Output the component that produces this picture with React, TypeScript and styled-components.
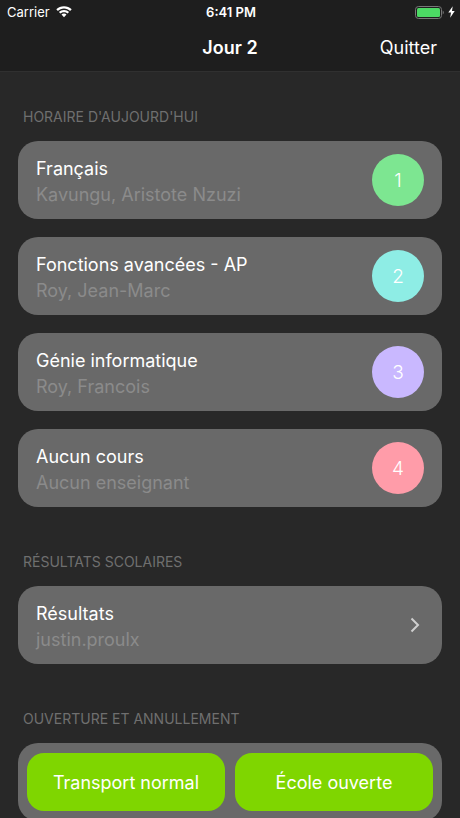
import React from "react";
import styled, { createGlobalStyle } from "styled-components";

const GlobalStyle = createGlobalStyle`
  *, *::before, *::after { box-sizing: border-box; }
  body {
    margin: 0;
    background: #282828;
    color: #fff;
    font-family: Inter, "Liberation Sans", sans-serif;
  }
  button, a { font: inherit; color: inherit; }
`;

const Screen = styled.div`
  display: flex;
  flex-direction: column;
  height: 100vh;
`;

const TopBar = styled.header`
  flex: none;
  background: #1e1e1e;
  border-bottom: 1px solid #303030;
`;

const StatusBar = styled.div`
  display: grid;
  grid-template-columns: 1fr auto 1fr;
  align-items: center;
  height: 24px;
  padding: 0 5px 0 7px;
  font-size: 13px;
  line-height: 16px;
`;

const Carrier = styled.div`
  display: flex;
  align-items: center;
  gap: 6px;
`;

const Clock = styled.time`
  font-weight: 600;
`;

const Power = styled.div`
  display: flex;
  align-items: center;
  justify-content: flex-end;
  gap: 4px;
`;

const NavBar = styled.div`
  display: grid;
  grid-template-columns: 1fr auto 1fr;
  align-items: center;
  height: 47px;
  padding: 0 23px;
`;

const Title = styled.h1`
  grid-column: 2;
  margin: 0;
  font-size: 18px;
  font-weight: 600;
  line-height: 24px;
`;

const QuitButton = styled.button`
  justify-self: end;
  padding: 0;
  border: 0;
  background: none;
  font-size: 18px;
  line-height: 24px;
  cursor: pointer;
`;

const Content = styled.main`
  flex: 1;
  min-height: 0;
  overflow-y: auto;
  scrollbar-width: none;
  padding: 35px 18px 18px;
  display: flex;
  flex-direction: column;
  gap: 45px;
`;

const Section = styled.section`
  display: flex;
  flex-direction: column;
  gap: 14px;
`;

const SectionTitle = styled.h2`
  margin: 0;
  padding-left: 5px;
  color: #6f6f6f;
  font-size: 14px;
  font-weight: 400;
  line-height: 20px;
  text-transform: uppercase;
`;

const CardList = styled.ul`
  display: flex;
  flex-direction: column;
  gap: 18px;
  margin: 0;
  padding: 0;
  list-style: none;
`;

const Card = styled.div`
  display: flex;
  align-items: center;
  justify-content: space-between;
  min-height: 78px;
  padding: 0 18px;
  border-radius: 20px;
  background: #696969;
  text-decoration: none;
`;

const CardText = styled.div`
  padding-top: 4px;
  font-size: 18px;
  line-height: 26px;
`;

const Primary = styled.div`
  color: #fff;
`;

const Secondary = styled.div`
  color: #8b8b8b;
`;

const Period = styled.span<{ $color: string }>`
  display: grid;
  place-items: center;
  flex: none;
  width: 52px;
  height: 52px;
  padding-top: 2px;
  border-radius: 50%;
  background: ${(p) => p.$color};
  font-size: 19px;
  font-weight: 300;
  line-height: 24px;
`;

const StatusPanel = styled.div`
  display: grid;
  grid-template-columns: 1fr 1fr;
  gap: 10px;
  padding: 10px 9px;
  border-radius: 20px;
  background: #696969;
`;

const StatusButton = styled.button`
  height: 58px;
  padding: 2px 0 0;
  border: 0;
  border-radius: 17px;
  background: #7fd600;
  font-size: 18px;
  line-height: 24px;
  cursor: pointer;
`;

const WifiIcon = () => (
  <svg width="16" height="12" viewBox="0 0 16 12" fill="#fff" aria-hidden="true">
    <path d="M8 0.3C5 0.3 2.3 1.4 0.3 3.3L1.9 4.9C3.5 3.4 5.6 2.5 8 2.5s4.5.9 6.1 2.4l1.6-1.6C13.7 1.4 11 .3 8 .3Z" />
    <path d="M8 4C6 4 4.200 4.700 2.900 6L4.500 7.600C5.400 6.700 6.600 6.200 8 6.200s2.600.5 3.500 1.400L13.100 6C11.800 4.700 10 4 8 4Z" />
    <path d="M8 7.600c-1 0-1.900.4-2.500 1L8 11.200l2.500-2.600c-.6-.6-1.500-1-2.500-1Z" />
  </svg>
);

const BatteryIcon = () => (
  <svg width="29" height="13" viewBox="0 0 29 13" aria-hidden="true">
    <rect x="0.500" y="0.500" width="26" height="12" rx="3" fill="none" stroke="#777" />
    <rect x="2" y="2" width="23" height="9" rx="1.500" fill="#4cd964" />
    <path d="M27.700 4.500C28.500 5 28.800 5.700 28.800 6.500s-.3 1.500-1.100 2Z" fill="#777" />
  </svg>
);

const BoltIcon = () => (
  <svg width="7" height="12" viewBox="0 0 7 12" fill="#fff" aria-hidden="true">
    <path d="M4.700 0.300L0.300 6.600H3L2.200 11.700L6.700 5H4Z" />
  </svg>
);

const ChevronIcon = () => (
  <svg width="18" height="18" viewBox="0 0 18 18" aria-hidden="true">
    <path d="M5.500 2.500L12 9L5.500 15.500" fill="none" stroke="#cfcfcf" strokeWidth="2" />
  </svg>
);

const courses = [
  { name: "Français", teacher: "Kavungu, Aristote Nzuzi", color: "#7de691" },
  { name: "Fonctions avancées - AP", teacher: "Roy, Jean-Marc", color: "#8eede5" },
  { name: "Génie informatique", teacher: "Roy, Francois", color: "#c9b8ff" },
  { name: "Aucun cours", teacher: "Aucun enseignant", color: "#ff9ca9" },
];

export default function App() {
  return (
    <Screen>
      <GlobalStyle />
      <TopBar>
        <StatusBar>
          <Carrier>
            Carrier
            <WifiIcon />
          </Carrier>
          <Clock>6:41 PM</Clock>
          <Power>
            <BatteryIcon />
            <BoltIcon />
          </Power>
        </StatusBar>
        <NavBar>
          <Title>Jour 2</Title>
          <QuitButton type="button">Quitter</QuitButton>
        </NavBar>
      </TopBar>
      <Content>
        <Section>
          <SectionTitle>Horaire d'aujourd'hui</SectionTitle>
          <CardList>
            {courses.map((course, i) => (
              <Card as="li" key={course.name}>
                <CardText>
                  <Primary>{course.name}</Primary>
                  <Secondary>{course.teacher}</Secondary>
                </CardText>
                <Period $color={course.color}>{i + 1}</Period>
              </Card>
            ))}
          </CardList>
        </Section>
        <Section>
          <SectionTitle>Résultats scolaires</SectionTitle>
          <Card as="a" href="#resultats">
            <CardText>
              <Primary>Résultats</Primary>
              <Secondary>justin.proulx</Secondary>
            </CardText>
            <ChevronIcon />
          </Card>
        </Section>
        <Section>
          <SectionTitle>Ouverture et annullement</SectionTitle>
          <StatusPanel>
            <StatusButton type="button">Transport normal</StatusButton>
            <StatusButton type="button">École ouverte</StatusButton>
          </StatusPanel>
        </Section>
      </Content>
    </Screen>
  );
}
